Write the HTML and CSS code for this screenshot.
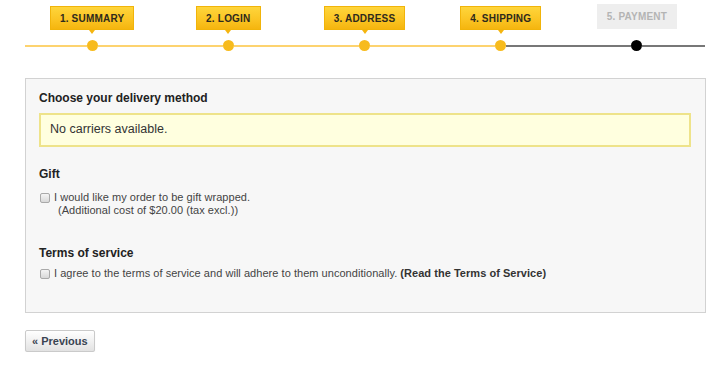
FILE: index.html
```html
<!DOCTYPE html>
<html lang="en">
<head>
<meta charset="utf-8">
<title>Order - Shipping</title>
<link rel="stylesheet" href="styles.css">
</head>
<body>
<div class="page">

<ul class="steps">
  <li class="step">
    <span class="step-label">1. SUMMARY</span>
    <span class="step-tip"></span>
    <span class="track"><i class="bar"></i><b class="dot"></b><i class="bar"></i></span>
  </li>
  <li class="step">
    <span class="step-label">2. LOGIN</span>
    <span class="step-tip"></span>
    <span class="track"><i class="bar"></i><b class="dot"></b><i class="bar"></i></span>
  </li>
  <li class="step">
    <span class="step-label">3. ADDRESS</span>
    <span class="step-tip"></span>
    <span class="track"><i class="bar"></i><b class="dot"></b><i class="bar"></i></span>
  </li>
  <li class="step">
    <span class="step-label">4. SHIPPING</span>
    <span class="step-tip"></span>
    <span class="track"><i class="bar"></i><b class="dot"></b><i class="bar off"></i></span>
  </li>
  <li class="step todo">
    <span class="step-label">5. PAYMENT</span>
    <span class="track"><i class="bar off"></i><b class="dot off"></b><i class="bar off"></i></span>
  </li>
</ul>

<div class="panel">
  <h3 class="panel-title">Choose your delivery method</h3>
  <p class="warning">No carriers available.</p>

  <h3 class="panel-title gift-title">Gift</h3>
  <div class="check-row">
    <input type="checkbox" class="chk" id="gift">
    <label for="gift" class="check-text">
      I would like my order to be gift wrapped.
      <span class="check-note">(Additional cost of $20.00 (tax excl.))</span>
    </label>
  </div>

  <h3 class="panel-title tos-title">Terms of service</h3>
  <div class="check-row tos-row">
    <input type="checkbox" class="chk" id="cgv">
    <label for="cgv" class="check-text">
      I agree to the terms of service and will adhere to them unconditionally. <a href="#" class="tos-link">(Read the Terms of Service)</a>
    </label>
  </div>
</div>

<div class="nav">
  <a href="#" class="btn">&laquo; Previous</a>
</div>

</div>
</body>
</html>
```

FILE: styles.css
```css
body {
    margin: 0;
    background: #fff;
    font-family: "Liberation Sans", Arial, sans-serif;
    color: #333;
}

.page {
    padding: 0 25px 0 25px;
    width: 681px;
}

/* order steps */
.steps {
    list-style: none;
    margin: 0 0 0 -1px;
    padding: 0;
    display: flex;
    width: 681px;
}
.step {
    flex: 1;
    height: 51px;
    display: flex;
    flex-direction: column;
    align-items: center;
}
.step:first-child .track {
    padding-left: 1px;
    box-sizing: border-box;
}
.step-label {
    margin-top: 6px;
    height: 22px;
    line-height: 23px;
    padding: 0 9px;
    border: 1px solid #f1b40a;
    background: linear-gradient(to bottom, #fed53b 0%, #fbc524 55%, #f5b50f 100%);
    font-size: 10px;
    font-weight: bold;
    color: #2e2a1c;
    letter-spacing: 0.2px;
    white-space: nowrap;
}
.step-tip {
    width: 0;
    height: 0;
    border-left: 3px solid transparent;
    border-right: 3px solid transparent;
    border-top: 4px solid #f5b50f;
}
.step.todo .step-label {
    margin-top: 4px;
    height: 25px;
    line-height: 25px;
    padding: 0 10px;
    border: 0;
    background: #eeeeee;
    color: #b4b4b4;
}
.track {
    margin-top: auto;
    width: 100%;
    height: 11px;
    display: flex;
    align-items: center;
}
.bar {
    flex: 1;
    height: 2px;
    background: #fdd36f;
}
.bar.off {
    background: #777;
}
.dot {
    width: 11px;
    height: 11px;
    border-radius: 50%;
    background: #f7bb1d;
}
.dot.off {
    background: #000;
}

/* main block */
.panel {
    margin-top: 27px;
    border: 1px solid #d2d2d2;
    background: #f7f7f7;
    padding: 12px 14px 32px 13px;
}
.panel-title {
    margin: 0;
    font-size: 12px;
    line-height: 15px;
    font-weight: bold;
    color: #222;
}
.warning {
    margin: 7px 0 0 0;
    border: 2px solid #eee38a;
    background: #ffffdf;
    padding: 7px 9px 8px 9px;
    font-size: 12.5px;
    line-height: 15px;
    color: #333;
}
.gift-title {
    margin-top: 20px;
}
.tos-title {
    margin-top: 29px;
}
.check-row {
    margin-top: 9px;
    display: flex;
    align-items: flex-start;
    font-size: 11px;
    line-height: 13px;
    letter-spacing: 0.04px;
    color: #444;
}
.tos-row {
    margin-top: 6px;
}
.chk {
    appearance: none;
    -webkit-appearance: none;
    margin: 2px 4px 0 1px;
    width: 10px;
    height: 10px;
    border: 1px solid #a9a9a9;
    border-radius: 2px;
    background: linear-gradient(to bottom, #f4f4f4, #d8d8d8);
    flex: none;
}
.check-note {
    display: block;
    padding-left: 4px;
}
.tos-link {
    color: #333;
    font-weight: bold;
    text-decoration: none;
}

/* navigation */
.nav {
    margin-top: 17px;
}
.btn {
    display: inline-block;
    height: 20px;
    line-height: 20px;
    padding: 0 6px;
    border: 1px solid #cacaca;
    border-radius: 2px;
    background: linear-gradient(to bottom, #ffffff, #e2e2e2);
    box-shadow: 0 1px 1px rgba(0, 0, 0, 0.08);
    font-size: 11px;
    font-weight: bold;
    color: #3a4452;
    text-decoration: none;
}
```
